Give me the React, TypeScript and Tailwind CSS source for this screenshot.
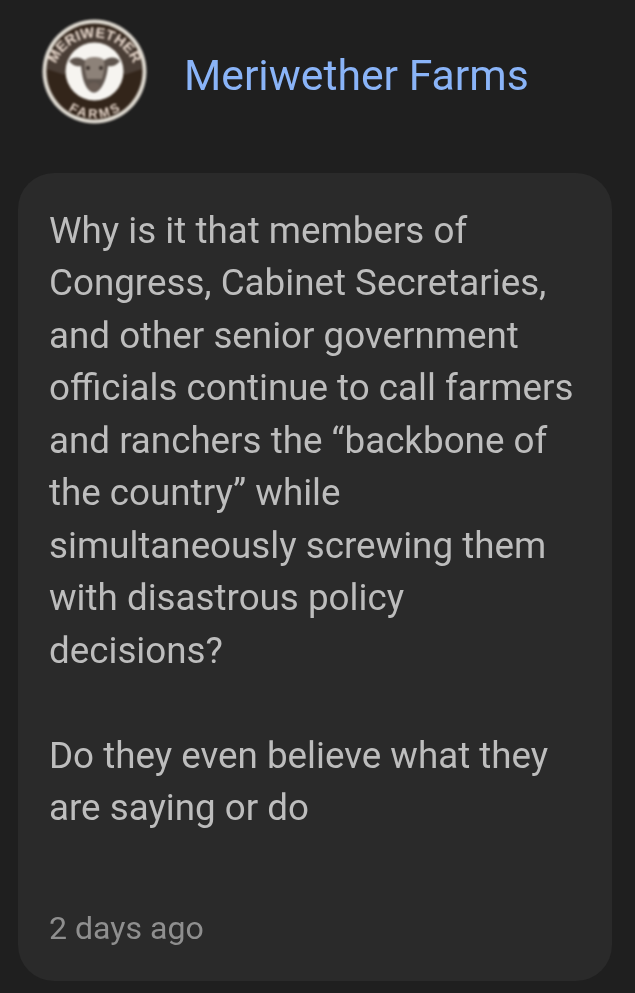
export default function App() {
  const lines = [
    "Why is it that members of",
    "Congress, Cabinet Secretaries,",
    "and other senior government",
    "officials continue to call farmers",
    "and ranchers the “backbone of",
    "the country” while",
    "simultaneously screwing them",
    "with disastrous policy",
    "decisions?",
    "\u00a0",
    "Do they even believe what they",
    "are saying or do",
  ];
  return (
    <div className="w-[635px] h-[993px] overflow-hidden bg-[#1f1f1f] font-['Roboto',sans-serif] flex flex-col">
      <div className="flex items-start h-[173px] pt-[19px] pl-[42px]">
        <svg width="105" height="105" viewBox="0 0 105 105" className="shrink-0 [filter:blur(0.8px)]">
          <circle cx="52.5" cy="52.5" r="52" fill="#ddd8cf" />
          <circle cx="52.5" cy="52.5" r="48" fill="#33251a" />
          <path d="M5 50A48 48 0 0 1 100 50L82 56A30 30 0 0 0 23 56Z" fill="#4a3e36" />
          <circle cx="52.5" cy="52.5" r="29" fill="#f6f4f0" />
          <path d="M27 42C32 37 38 38 42 41L63 41C67 38 73 37 78 42C74 47 69 48 66 47C65 57 62 67 56 72C53 74 51 74 48 72C42 67 40 57 39 47C36 48 31 47 27 42Z" fill="#5f554e" />
          <path d="M43 41C47 37 58 37 62 41C63 47 62 54 60 60L45 60C43 54 42 47 43 41Z" fill="#8d8279" />
          <circle cx="46" cy="49" r="2" fill="#3a312c" />
          <circle cx="59" cy="49" r="2" fill="#3a312c" />
          <ellipse cx="52" cy="68" rx="6" ry="4.5" fill="#6a5d55" />
          <defs>
            <path id="top" d="M11 60A41.5 41.5 0 0 1 94 60" />
            <path id="bot" d="M21 72A37 37 0 0 0 84 72" />
          </defs>
          <text fontFamily="'Liberation Sans',sans-serif" fontWeight="700" fontSize="14.5" fill="#e6d6ca">
            <textPath href="#top" startOffset="50%" textAnchor="middle">MERIWETHER</textPath>
          </text>
          <text fontFamily="'Liberation Sans',sans-serif" fontWeight="700" fontSize="13" fill="#e6d6ca">
            <textPath href="#bot" startOffset="50%" textAnchor="middle" dominantBaseline="hanging">FARMS</textPath>
          </text>
        </svg>
        <div className="ml-[37px] mt-[35px] text-[42.7px] leading-none text-[#8ab4f8] [will-change:transform]">Meriwether Farms</div>
      </div>
      <div className="ml-[18px] w-[594px] h-[808px] rounded-[36px] bg-[#2a2a2a] pl-[31px] pt-[32px] flex flex-col">
        <div className="text-[36.75px] leading-[52.45px] text-[#bdbdbd] whitespace-nowrap [will-change:transform]">
          {lines.map((l, i) => (
            <div key={i}>{l}</div>
          ))}
        </div>
        <div className="mt-[73.6px] text-[32.1px] leading-[40px] text-[#8f8f8f] [will-change:transform]">2 days ago</div>
      </div>
    </div>
  );
}
